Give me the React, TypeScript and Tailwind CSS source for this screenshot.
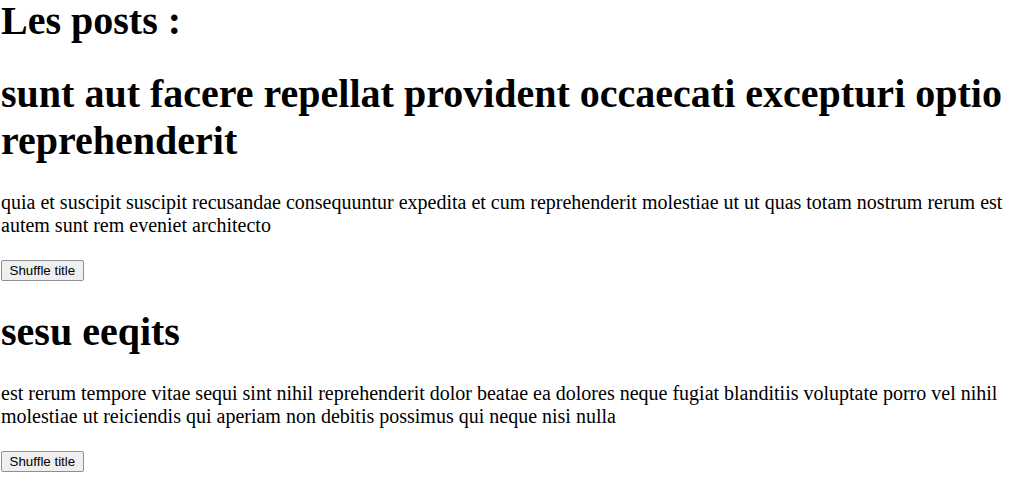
export default function App() {
  const posts = [
    {
      title: "sunt aut facere repellat provident occaecati excepturi optio reprehenderit",
      body: "quia et suscipit suscipit recusandae consequuntur expedita et cum reprehenderit molestiae ut ut quas totam nostrum rerum est autem sunt rem eveniet architecto",
    },
    {
      title: "sesu eeqits",
      body: "est rerum tempore vitae sequi sint nihil reprehenderit dolor beatae ea dolores neque fugiat blanditiis voluptate porro vel nihil molestiae ut reiciendis qui aperiam non debitis possimus qui neque nisi nulla",
    },
  ];
  return (
    <div className="bg-white text-black font-['Liberation_Serif',serif] text-[20px] leading-[normal] pl-px pt-px">
      <h1 className="text-[40px] leading-[39px] font-bold mb-[30.3px]">Les posts :</h1>
      {posts.map((p, i) => (
        <div key={i}>
          <h1 className="text-[40px] leading-[normal] font-bold my-[26.8px]">{p.title}</h1>
          <p className="my-[20px]">{p.body}</p>
          <div>
            <button className="inline-block align-baseline py-[2px] px-[7.5px] border border-[#8f8f8f] rounded-[2px] bg-[#efefef] text-[13.333px] leading-[normal] text-black font-['Liberation_Sans',sans-serif]">
              Shuffle title
            </button>
          </div>
        </div>
      ))}
    </div>
  );
}
